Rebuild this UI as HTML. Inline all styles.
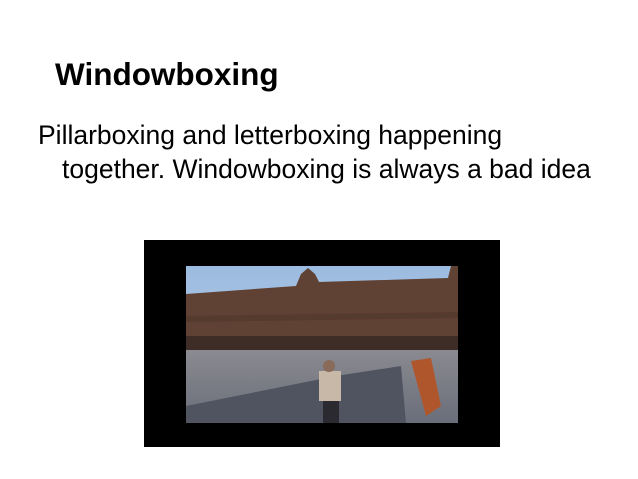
<!DOCTYPE html>
<html><head><style>
body{margin:0;width:638px;height:479px;background:#fff;position:relative;overflow:hidden;font-family:"Liberation Sans",sans-serif;color:#000}
.t{position:absolute;left:55px;top:59px;font-size:31.5px;font-weight:bold;line-height:1}
.b{position:absolute;font-size:26.5px;white-space:nowrap;line-height:1}
</style></head><body>
<div class="t">Windowboxing</div>
<div class="b" style="left:38px;top:122px">Pillarboxing and letterboxing happening</div>
<div class="b" style="left:62px;top:156px">together. Windowboxing is always a bad idea</div>
<svg style="position:absolute;left:144px;top:240px" width="356" height="207" viewBox="0 0 356 207">
<rect width="356" height="207" fill="#000"/>
<g transform="translate(42,26)">
<defs><linearGradient id="s" x1="0" y1="0" x2="0" y2="1"><stop offset="0" stop-color="#9bbbe0"/><stop offset="1" stop-color="#c3d4e6"/></linearGradient>
<linearGradient id="p" x1="0" y1="0" x2="0" y2="1"><stop offset="0" stop-color="#8a8a90"/><stop offset="1" stop-color="#6a6e7a"/></linearGradient></defs>
<rect width="272" height="157" fill="url(#s)"/>
<path d="M0 28 L110 20 L115 8 L122 2 L129 8 L133 16 L262 12 L265 0 L272 0 L272 90 L0 90Z" fill="#604234"/>
<path d="M0 50 L272 46 L272 52 L0 56Z" fill="#553a2e"/>
<rect x="0" y="70" width="272" height="16" fill="#3e2c26"/>
<rect x="0" y="84" width="272" height="73" fill="url(#p)"/>
<path d="M0 140 L150 110 L215 100 L220 157 L0 157Z" fill="#4f5460"/>
<path d="M225 95 L245 92 L255 140 L240 150Z" fill="#b0562c"/>
<rect x="133" y="105" width="22" height="30" fill="#c8b8a8"/>
<rect x="137" y="135" width="16" height="22" fill="#2a2a30"/>
<circle cx="143" cy="100" r="6" fill="#8a6a58"/>
</g>
</svg>
</body></html>
